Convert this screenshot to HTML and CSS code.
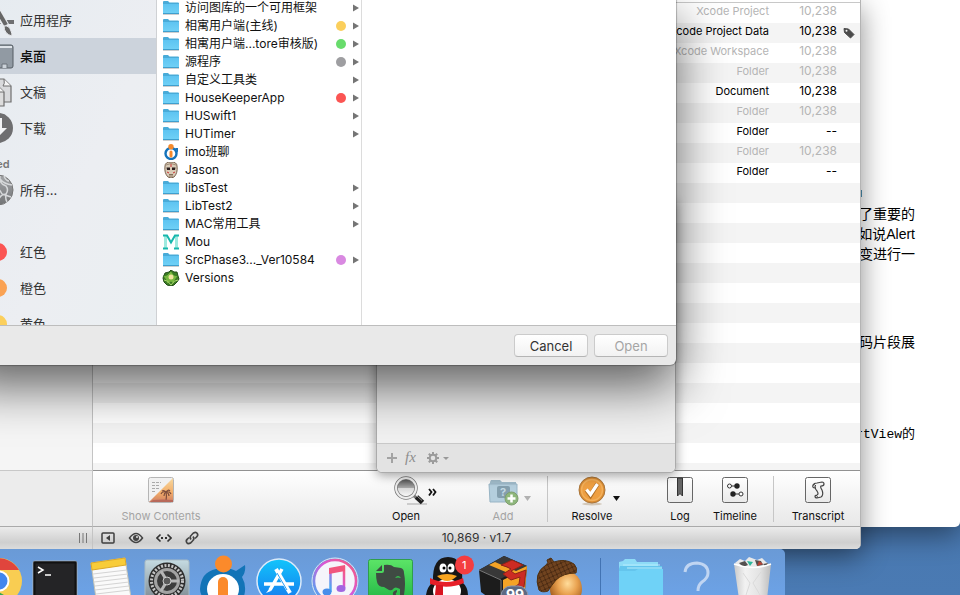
FILE: index.html
```html
<!DOCTYPE html>
<html lang="zh-CN">
<head>
<meta charset="utf-8">
<title>Desktop</title>
<link rel="stylesheet" href="styles.css">
</head>
<body>
<svg class="defs" aria-hidden="true">
  <defs>
    <linearGradient id="folderFill" x1="0" y1="0" x2="0" y2="1"><stop offset="0" stop-color="#5ec4f1"/><stop offset="1" stop-color="#6fd0f6"/></linearGradient>
    <linearGradient id="btnFill" x1="0" y1="0" x2="0" y2="1"><stop offset="0" stop-color="#fff"/><stop offset="1" stop-color="#e9e9e9"/></linearGradient>
    <linearGradient id="grayFill" x1="0" y1="0" x2="0" y2="1"><stop offset="0" stop-color="#a3a5a8"/><stop offset="1" stop-color="#737577"/></linearGradient>
    <linearGradient id="blueFill" x1="0" y1="0" x2="0" y2="1"><stop offset="0" stop-color="#12c5fb"/><stop offset="1" stop-color="#1678ee"/></linearGradient>
    <linearGradient id="noteFill" x1="1" y1="0" x2="0" y2="1"><stop offset="0" stop-color="#fb5b74"/><stop offset=".45" stop-color="#d758d8"/><stop offset="1" stop-color="#37b4f6"/></linearGradient>
    <linearGradient id="sunset" x1="0" y1="0" x2="0" y2="1"><stop offset="0" stop-color="#f7d9a0"/><stop offset=".6" stop-color="#f3ae6a"/><stop offset="1" stop-color="#cf7f63"/></linearGradient>
    <linearGradient id="greenFill" x1="0" y1="0" x2="0" y2="1"><stop offset="0" stop-color="#5ce467"/><stop offset="1" stop-color="#1fb544"/></linearGradient>
    <linearGradient id="metal" x1="0" y1="0" x2="0" y2="1"><stop offset="0" stop-color="#c5dbe2"/><stop offset="1" stop-color="#77828a"/></linearGradient>
    <linearGradient id="trashFill"><stop offset="0" stop-color="#c9c9c9"/><stop offset=".3" stop-color="#f2f2f2"/><stop offset=".7" stop-color="#e3e3e3"/><stop offset="1" stop-color="#bdbdbd"/></linearGradient>
    <linearGradient id="lens" x1="0" y1="0" x2="0" y2="1"><stop offset="0" stop-color="#454545"/><stop offset=".5" stop-color="#a9a9a9"/><stop offset=".52" stop-color="#d8d8d8"/><stop offset="1" stop-color="#fff"/></linearGradient>
    <radialGradient id="nut" cx=".55" cy=".35" r=".6"><stop offset="0" stop-color="#ffdc9a"/><stop offset=".5" stop-color="#e9a250"/><stop offset="1" stop-color="#a8601f"/></radialGradient>
    <pattern id="capTexture" width="6" height="6" patternUnits="userSpaceOnUse" patternTransform="rotate(20)"><rect width="6" height="6" fill="#70431f"/><path d="M0 0l6 6M6 0L0 6" stroke="#4a2a12" stroke-width="1"/></pattern>
    <symbol id="folder" viewBox="0 0 18 16"><path d="M1 14.500h16" stroke="#cfcfcf"/><path d="M1 2q0-1 1-1h4l1.500 1.500H16q1 0 1 1V14H1z" fill="#49abd8"/><path d="M1 4h16v9H1z" fill="url(#folderFill)"/><path d="M1 13.500h16" stroke="#3f9fce"/></symbol>
    <symbol id="arrow" viewBox="0 0 8 8"><path d="M1 .5v7L7 4z" fill="#757575"/></symbol>
  </defs>
</svg>

<article class="document">
  <span class="document-mark"></span>
  <p>了重要的<br>如说Alert<br>变进行一</p>
  <p class="snippet">代码片段展</p>
  <p class="code"><code>rtView</code>的</p>
</article>

<main class="repo-window">
  <aside class="repo-sidebar"></aside>
  <section class="browser">
    <div class="browser-head"></div>
    <div class="stripes">
      <table class="files">
        <tbody>
          <tr class="muted"><td>Xcode Project</td><td>10,238</td><td></td></tr>
          <tr><td>Xcode Project Data</td><td>10,238</td><td class="tag-cell"><svg class="tag" viewBox="0 0 12 12"><path d="M1 1.500L5.500 2 11 7.500 7.500 11 1.500 5.500z" fill="#4b4b4b" stroke="#4b4b4b" stroke-linejoin="round"/><circle cx="3.500" cy="3.700" r="1" fill="#f4f4f4"/></svg></td></tr>
          <tr class="muted"><td>Xcode Workspace</td><td>10,238</td><td></td></tr>
          <tr class="muted"><td>Folder</td><td>10,238</td><td></td></tr>
          <tr><td>Document</td><td>10,238</td><td></td></tr>
          <tr class="muted"><td>Folder</td><td>10,238</td><td></td></tr>
          <tr><td>Folder</td><td>--</td><td></td></tr>
          <tr class="muted"><td>Folder</td><td>10,238</td><td></td></tr>
          <tr><td>Folder</td><td>--</td><td></td></tr>
        </tbody>
      </table>
    </div>
  </section>
  <div class="sidebar-foot"></div>
  <div class="toolbar">
    <button class="tool wide" disabled>
      <svg viewBox="0 0 136 30"><rect x="55.500" y="1.500" width="25" height="25" rx="2" fill="#f1f1f1" stroke="#b5b5b5"/><path d="M80 2v24H56z" fill="url(#sunset)"/><path d="M59 6.500h9M59 9.500h7M59 12.500h8M59 15.500h4" stroke="#aaa" stroke-dasharray="3 1"/><path d="M73 25q1-5 0-9m0 0q-4-1-5 2m5-2q-2 1-2 4m2-4q4-1 5 2m-5-2q3 1 3 4m-3-4q-2-2-4-1m4 1q2-3 4-1" stroke="#7d4c3c" fill="none" stroke-width="1.200"/><path d="M57 26h23v-2q-10-1-20 0z" fill="#b8695a"/></svg>
      <span>Show Contents</span>
    </button>
    <span class="spacer"></span>
    <button class="tool">
      <svg viewBox="0 0 66 30"><path d="M34 28h20" stroke="#ccc" stroke-width="2"/><path d="M41 20l4 3" stroke="#777" stroke-width="3"/><path d="M43.500 21l6 5.500" stroke="#1d1d1d" stroke-width="5"/><path d="M44 20l5 4.500" stroke="#999" stroke-width="1"/><circle cx="33" cy="12" r="10" fill="url(#lens)" stroke="#777" stroke-width="3.500"/><circle cx="33" cy="12" r="10" fill="none" stroke="#eee" stroke-width="2"/><path d="M56 13l2.500 3-2.500 3.500M60 13l2.500 3-2.500 3.500" fill="none" stroke="#111" stroke-width="1.800"/></svg>
      <span>Open</span>
    </button>
    <button class="tool add" disabled>
      <svg viewBox="0 0 66 30"><path d="M20 6l1-2h9l2 2h14v20H20z" fill="#a1bccb"/><path d="M19 8h28v18H20z" fill="#b4cedd" stroke="#98b4c4"/><rect x="27" y="10" width="13" height="12" rx="2" fill="#849fae"/><text x="30" y="20" font-size="11" font-weight="700" fill="#c2d8e4">?</text><circle cx="41.500" cy="22.500" r="6.500" fill="#8eb77c" stroke="#7f9e70"/><path d="M41.500 18.500v8M37.500 22.500h8" stroke="#fff" stroke-width="2.500"/><path d="M54 20h7l-3.500 5z" fill="#b1b1b1"/></svg>
      <span>Add</span>
    </button>
    <span class="divider"></span>
    <button class="tool">
      <svg viewBox="0 0 66 30"><ellipse cx="33" cy="28" rx="10" ry="1.500" fill="#d2c7b8"/><circle cx="33" cy="14" r="13" fill="#dc8d32" stroke="#a9763d"/><circle cx="33" cy="14" r="10.500" fill="#ee9f42" stroke="#f2b05c" stroke-width="1.500"/><path d="M27.500 14l4 5.500L38.500 8" fill="none" stroke="#b17129" stroke-width="4.500"/><path d="M27.500 13.500l4 5L38.500 8" fill="none" stroke="#fff" stroke-width="3.300"/><path d="M54 20h7l-3.500 5z" fill="#111"/></svg>
      <span>Resolve</span>
    </button>
    <button class="tool log">
      <svg viewBox="0 0 66 30"><rect x="20.500" y="1.500" width="25" height="25" rx="2" fill="url(#btnFill)" stroke="#666"/><path d="M30.500 2h5v18L33 17.500 30.500 20z" fill="#666" stroke="#333"/></svg>
      <span>Log</span>
    </button>
    <button class="tool timeline">
      <svg viewBox="0 0 66 30"><rect x="20.500" y="1.500" width="25" height="25" rx="2" fill="url(#btnFill)" stroke="#666"/><path d="M29 10h6M31 18h6" stroke="#333"/><circle cx="27.500" cy="10" r="2" fill="#fff" stroke="#333"/><circle cx="35" cy="10" r="2.700" fill="#222"/><circle cx="31" cy="18" r="2.700" fill="#222"/><circle cx="39" cy="18" r="2" fill="#fff" stroke="#333"/></svg>
      <span>Timeline</span>
    </button>
    <span class="divider"></span>
    <button class="tool">
      <svg viewBox="0 0 66 30"><rect x="20.500" y="1.500" width="25" height="25" rx="2" fill="url(#btnFill)" stroke="#666"/><path d="M30 12q-3 0-2-3 1-2 4-2l5-1q2 0 2 2t-3 2q-1 1 1 4 2 5-1 7l-4 1q-2 0-2-2 0-1 2-1 2-1 0-4-2-2-2-5" fill="#f3f3f3" stroke="#444" stroke-width="1.200"/><path d="M28 9q2-1 3 1M32 22q1-2-1-3" fill="none" stroke="#444"/></svg>
      <span>Transcript</span>
    </button>
  </div>
  <div class="status-side"><svg class="grip" viewBox="0 0 10 10"><path d="M1.500 0v10M5 0v10M8.500 0v10" stroke="#777"/></svg></div>
  <footer class="status">
    <div class="status-tools">
      <button aria-label="Toggle panel"><svg viewBox="0 0 16 16"><rect x="2" y="3" width="12" height="10" rx="1" fill="none" stroke="#3f3f3f" stroke-width="1.500"/><path d="M10 5v6L6 8z" fill="#3f3f3f"/></svg></button>
      <button aria-label="Preview"><svg viewBox="0 0 16 16"><path d="M1.500 8Q8-1 14.500 8 8 17 1.500 8z" fill="none" stroke="#444" stroke-width="1.500"/><circle cx="8" cy="8" r="3" fill="#444"/><circle cx="9" cy="7" r="1" fill="#ddd"/></svg></button>
      <button aria-label="Compare"><svg viewBox="0 0 16 16"><path d="M4.500 4.500L1 8l3.500 3.500M11.500 4.500L15 8l-3.500 3.500" fill="none" stroke="#333" stroke-width="1.600"/><path d="M5 8h2M9 8h2" stroke="#333" stroke-width="2"/></svg></button>
      <button aria-label="Link"><svg viewBox="0 0 16 16" fill="none" stroke="#444" stroke-width="1.600"><path d="M7 9.500Q5 7 7.500 5L9.500 3Q12 1.500 13.300 3.500 14.500 5.500 12.500 7L11 8.500M9 6.500q2 2.500-.5 4.500l-2 2Q4 14.500 2.700 12.500 1.500 10.500 3.500 9L5 7.500"/></svg></button>
    </div>
    <span class="version">10,869 · v1.7</span>
  </footer>
</main>

<section class="sheet">
  <footer class="sheet-bar">
    <svg viewBox="0 0 64 16"><path d="M7 3v10M2 8h10" stroke="#a3a3a3" stroke-width="2"/><text x="20" y="12" class="fx">fx</text><g stroke="#9b9b9b"><circle cx="48" cy="8" r="3.300" fill="none" stroke-width="2"/><path d="M48 2v3M48 11v3M42 8h3M51 8h3M43.800 3.800l2 2M50.200 10.200l2 2M43.800 12.200l2-2M50.200 5.800l2-2" stroke-width="2"/></g><path d="M58 7h6l-3 3z" fill="#999"/></svg>
  </footer>
</section>

<section class="dialog" role="dialog" aria-label="Open">
  <div class="panes">
    <nav class="places">
      <a class="place" href="#"><svg viewBox="0 0 32 32"><path d="M4 16h28v4H4z" fill="#6e6f71"/><path d="M15 5l10 19" stroke="#e7eaee" stroke-width="7"/><path d="M13 2l11 19" stroke="#666" stroke-width="4"/><path d="M22 22q5-1 7 5 1 2 1 5-8-2-8-10z" fill="#666" stroke="#e7eaee"/></svg><span>应用程序</span></a>
      <a class="place selected" href="#"><svg viewBox="0 0 32 32"><rect x="1" y="5" width="30" height="23" rx="2" fill="#919aa3" stroke="#555c63"/><path d="M2 7h28" stroke="#dfe4e9" stroke-width="2"/><path d="M20 28v-4h5v4" fill="#ccd3da" stroke="#6b737b"/></svg><span>桌面</span></a>
      <a class="place" href="#"><svg viewBox="0 0 32 32"><path d="M14 3h8l7 7v16H14z" fill="#d9dadc" stroke="#6e6e6e" stroke-width="1.200"/><path d="M22 3q1 5-1 7h8" fill="#f5f5f5" stroke="#6e6e6e"/><path d="M7 9h8l7 7v14H7z" fill="#ddd" stroke="#6e6e6e" stroke-width="1.200"/><path d="M15 9q1 5-1 7h8" fill="#f5f5f5" stroke="#6e6e6e"/></svg><span>文稿</span></a>
      <a class="place" href="#"><svg viewBox="0 0 32 32"><circle cx="16" cy="16" r="15" fill="#6e6e70"/><path d="M13 6h7v10h5l-9 9-9-9h6z" fill="#f2f3f5"/></svg><span>下载</span></a>
      <h2 class="places-title">Shared</h2>
      <a class="place" href="#"><svg viewBox="0 0 32 32"><circle cx="16" cy="16" r="15" fill="url(#grayFill)" stroke="#777"/><path d="M18 2q-1 8 6 10 3 4 0 8-5 0-7 5M18 5q4 5 12 6M20 20l9 3M12 12q5 2 8 8M24 20q-1 5 1 8M22 2q2 5 5 5" fill="none" stroke="#d6d8da" stroke-width="1.500"/></svg><span>所有...</span></a>
      <span class="places-gap"></span>
      <a class="place" href="#"><span class="place-dot red"></span><span>红色</span></a>
      <a class="place" href="#"><span class="place-dot orange"></span><span>橙色</span></a>
      <a class="place" href="#"><span class="place-dot yellow"></span><span>黄色</span></a>
    </nav>
    <ul class="entries">
      <li><svg class="ico"><use href="#folder"/></svg><span class="name">访问图库的一个可用框架</span><svg class="more"><use href="#arrow"/></svg></li>
      <li><svg class="ico"><use href="#folder"/></svg><span class="name">相寓用户端(主线)</span><i class="dot yellow"></i><svg class="more"><use href="#arrow"/></svg></li>
      <li><svg class="ico"><use href="#folder"/></svg><span class="name">相寓用户端...tore审核版)</span><i class="dot green"></i><svg class="more"><use href="#arrow"/></svg></li>
      <li><svg class="ico"><use href="#folder"/></svg><span class="name">源程序</span><i class="dot gray"></i><svg class="more"><use href="#arrow"/></svg></li>
      <li><svg class="ico"><use href="#folder"/></svg><span class="name">自定义工具类</span><svg class="more"><use href="#arrow"/></svg></li>
      <li><svg class="ico"><use href="#folder"/></svg><span class="name">HouseKeeperApp</span><i class="dot red"></i><svg class="more"><use href="#arrow"/></svg></li>
      <li><svg class="ico"><use href="#folder"/></svg><span class="name">HUSwift1</span><svg class="more"><use href="#arrow"/></svg></li>
      <li><svg class="ico"><use href="#folder"/></svg><span class="name">HUTimer</span><svg class="more"><use href="#arrow"/></svg></li>
      <li><svg class="ico" viewBox="0 0 18 16"><circle cx="9" cy="9.500" r="5.500" fill="#fff" stroke="#1573bb" stroke-width="2.400"/><path d="M13 4h3v5z" fill="#1573bb"/><circle cx="9" cy="2.700" r="2.700" fill="#f58a2c"/><rect x="7.500" y="6.500" width="3" height="7" rx="1.500" fill="#f58a2c"/></svg><span class="name">imo班聊</span></li>
      <li><svg class="ico" viewBox="0 0 18 16"><path d="M3 4q0-4 6-4t6 4q1 7-3 11-3 2-6 0Q2 11 3 4z" fill="#d9cbb7" stroke="#79624e"/><path d="M4 3q5-3 10 0" stroke="#a08c76" fill="none"/><path d="M4.500 5.500h3.500v2.500H5zM10 5.500h3.500L13 8h-3z" fill="#2b1f1f"/><path d="M9 2v3M5 10l2 1M13 10l-2 1" stroke="#c33"/><path d="M7 12.500h4M7 14h4" stroke="#86705b"/></svg><span class="name">Jason</span></li>
      <li><svg class="ico"><use href="#folder"/></svg><span class="name">libsTest</span><svg class="more"><use href="#arrow"/></svg></li>
      <li><svg class="ico"><use href="#folder"/></svg><span class="name">LibTest2</span><svg class="more"><use href="#arrow"/></svg></li>
      <li><svg class="ico"><use href="#folder"/></svg><span class="name">MAC常用工具</span><svg class="more"><use href="#arrow"/></svg></li>
      <li><svg class="ico" viewBox="0 0 18 16"><path d="M3.500 1v13M14.500 1v13" stroke="#9eeadf" stroke-width="3"/><path d="M1 1.500h4l4 7 4-7h4M1 14.500h5M12 14.500h5" fill="none" stroke="#18b7ad" stroke-width="2"/></svg><span class="name">Mou</span></li>
      <li><svg class="ico"><use href="#folder"/></svg><span class="name">SrcPhase3..._Ver10584</span><i class="dot purple"></i><svg class="more"><use href="#arrow"/></svg></li>
      <li><svg class="ico" viewBox="0 0 18 16"><path d="M9 0l3 2 3 0 1 4 1 3-2 3-3 3-3 1-4-1-3-3-1-4 2-5 4-1z" fill="#3c7e25" stroke="#244f18"/><path d="M9 1l3 4 4 1-3 4-1 4-3-2-4 2-1-4-3-4 4-1z" fill="#77b83f" stroke="#2f6b20" stroke-width=".7"/><circle cx="9" cy="7" r="2.500" fill="#f2e2a0"/><path d="M2 10q4 0 7 5 3-5 7-5" fill="none" stroke="#a9d66b"/></svg><span class="name">Versions</span></li>
    </ul>
    <div class="preview"></div>
  </div>
  <footer class="actions">
    <button class="push">Cancel</button>
    <button class="push" disabled>Open</button>
  </footer>
</section>

<nav class="dock" aria-label="Dock">
  <button aria-label="Chrome"><svg viewBox="0 0 56 46"><circle cx="28" cy="32" r="23" fill="#f9cd52"/><path d="M5 32a23 23 0 0 1 43-11H28z" fill="#e0453d"/><path d="M5 20l14 18 14 8H5z" fill="#35a852"/><circle cx="28" cy="32" r="10.500" fill="#fff"/><circle cx="28" cy="32" r="8.500" fill="#4286ee"/></svg></button>
  <button aria-label="Terminal"><svg viewBox="0 0 56 46"><rect x="6" y="12" width="44" height="44" rx="2" fill="#242426" stroke="#a4b0bc"/><rect x="7.500" y="13.500" width="41" height="41" fill="none" stroke="#111" stroke-width="2"/><path d="M11 18l5 3-5 3M18 26h6" fill="none" stroke="#fff" stroke-width="1.500"/></svg></button>
  <button aria-label="Notes"><svg viewBox="0 0 56 46"><path d="M8 14l34-5 6 40H13z" fill="#fafafa" stroke="#c9c6b6"/><path d="M8 14l34-5 1 7-34 5z" fill="#f8cc39" stroke="#dca929"/><path d="M10 25l34-4M11 29l34-4M11 33l34-4M12 37l34-4M12 41l34-4M13 45l34-4" stroke="#d4d4d4"/></svg></button>
  <button aria-label="Settings"><svg viewBox="0 0 56 46"><rect x="6" y="11" width="44" height="44" rx="2" fill="url(#metal)" stroke="#a9bac3"/><circle cx="28" cy="32" r="18.500" fill="#2e2e2e"/><circle cx="28" cy="32" r="15.500" fill="none" stroke="#c4c4c4" stroke-width="3" stroke-dasharray="2 1.500"/><circle cx="28" cy="32" r="11.500" fill="#3c3c3c" stroke="#a2a2a2" stroke-width="3"/><path d="M28 32L22 22M28 32h12M28 32l-6 10" stroke="#b6b6b6" stroke-width="3"/><circle cx="28" cy="32" r="4" fill="#5a5a5a" stroke="#ccc"/></svg></button>
  <button aria-label="imo"><svg viewBox="0 0 56 46"><path d="M5 40q1-17 16-20h15q3 1 5 2l9-6q1 7-3 12 5 9 2 19H7Q5 44 5 40z" fill="#1274b7"/><ellipse cx="28" cy="40" rx="16" ry="15" fill="#fff"/><rect x="23" y="28" width="10" height="30" rx="5" fill="#fb8a2b"/><circle cx="28.500" cy="15" r="8.500" fill="#fb8a2b"/></svg></button>
  <button aria-label="App Store"><svg viewBox="0 0 56 46"><circle cx="28" cy="32" r="22" fill="url(#blueFill)" stroke="#dbeafa" stroke-width="1.500"/><path d="M31 20L19 41M13 35h30" stroke="#fff" stroke-width="3.500"/><path d="M25 20l14 24" stroke="#fff" stroke-width="4"/><path d="M26 24l10 17" stroke="#2a9ff4"/><path d="M19 39l-4 5 5-2z" fill="#fff"/></svg></button>
  <button aria-label="Music"><svg viewBox="0 0 56 46"><circle cx="28" cy="32" r="21" fill="#f5f5fb" stroke="url(#noteFill)" stroke-width="2.500"/><circle cx="28" cy="32" r="23" fill="none" stroke="#dbe7f6"/><path d="M23.500 43V20M37 39V17" fill="none" stroke="url(#noteFill)" stroke-width="2.500"/><path d="M22 19l16-3v6l-16 3z" fill="#f1567e"/><ellipse cx="20" cy="43" rx="4.500" ry="3.500" fill="#488eea"/><ellipse cx="34" cy="39.500" rx="4.500" ry="3.500" fill="#a266e1"/></svg></button>
  <button aria-label="Evernote"><svg viewBox="0 0 56 46"><rect x="5.500" y="10.500" width="44" height="44" rx="2" fill="url(#greenFill)" stroke="#2f9e4c"/><path d="M13 24h6q2 0 2-2v-6q7-1 10 2l7 1q3 1 3 5 2 10 0 22H30q-1-4 4-5v2q-2 1-1 3h4v-6q-5-3-7 0-1 2-4 1l-5-3q-6 0-7-5-1-4-1-9z" fill="#3f4b43"/><path d="M13 22l6-6v6z" fill="#3f4b43"/><path d="M32 29q3-4 6 0-3-1-6 0z" fill="#38c250"/></svg></button>
  <button aria-label="QQ"><svg viewBox="0 0 56 46"><path d="M7 46q1-8 7-13-1-25 15-25t14 25q6 5 6 13z" fill="#171717"/><ellipse cx="28" cy="42" rx="14" ry="12" fill="#fff"/><ellipse cx="24" cy="19" rx="3.500" ry="4.500" fill="#fff"/><ellipse cx="32" cy="19" rx="3.500" ry="4.500" fill="#fff"/><circle cx="25" cy="19" r="1.500"/><circle cx="31" cy="19" r="1.500"/><path d="M11 29q16 8 33 0l1 5q-16 7-34 1z" fill="#e71f28"/><path d="M18 27q10-4 20 0-5 5-10 5t-10-5z" fill="#f9a51f"/><path d="M17 36h7v10h-8z" fill="#d91520"/><circle cx="45.500" cy="16" r="9.500" fill="#f43d40"/><text x="43" y="20" font-size="11" fill="#fff">1</text></svg></button>
  <button aria-label="Box"><svg viewBox="0 0 56 46"><path d="M4 21l25-14 23 10-2 24-26 15L6 43z" fill="#1c1c1c"/><path d="M4 21l25-14 23 10-27 13z" fill="#383838"/><path d="M14 16l6-3 21 9 11-5-2 24-22 13V31l10-5z" fill="#f4a326"/><path d="M26 16l11-5 11 5-12 6 4 3 11-4-2 17-13 8v-6l8-5 1-7-9 3-8-6 8-5-4-2z" fill="#cc2b23" stroke="#8e2417"/><path d="M4 21l22 10v15" fill="none" stroke="#777"/><rect x="26" y="37" width="27" height="20" rx="10" fill="#5d6982" stroke="#8e99ad"/><text x="31" y="51" font-size="14" font-weight="700" fill="#fff">99</text></svg></button>
  <button aria-label="Acorn"><svg viewBox="0 0 56 46"><ellipse cx="35" cy="40" rx="16" ry="18" fill="url(#nut)"/><path d="M8 41Q2 24 15 16q3-2 1-5l4-2 3 4q11-4 20 2 4 4 2 9-13 0-20 7-5 6-8 11-6 2-9-1z" fill="url(#capTexture)" stroke="#50300f"/></svg></button>
  <span class="dock-divider"></span>
  <button aria-label="Folder"><svg viewBox="0 0 56 46"><path d="M6 13l4-1 2-2h10l2 3h21v10H6z" fill="#8edcf7"/><path d="M7 17h42v30H6V20z" fill="#64c5ed"/><path d="M10 16h37M14 19h35" stroke="#b6edfc"/><path d="M6 22h16l3-2h25v30H6z" fill="#6fd2f7"/></svg></button>
  <button aria-label="Help"><svg viewBox="0 0 56 46"><path d="M16 23q1-9 12-9 11 1 11 10 0 5-6 9-4 3-4 9" fill="none" stroke="#c0d5f2" stroke-width="3"/></svg></button>
  <button aria-label="Trash"><svg viewBox="0 0 56 46"><path d="M10 14l5-4 5 2 4-4 8 3 5-2 4 4 4 3-4 4H14z" fill="#e9e9e9"/><path d="M14 14l6-2 3 4-5 2zM30 11l6 1 2 4-6 1zM38 15l5-1-2 4z" fill="#53504f"/><path d="M22 12l6 1-3 4z" fill="#2bb89b"/><path d="M34 12l4 3-6 2z" fill="#b94335"/><path d="M9 15q19 7 37 0l-4 35H14z" fill="url(#trashFill)"/><path d="M9 15q19 7 37 0" fill="none" stroke="#fff" stroke-width="1.500"/><path d="M18 24l7 10-4 12M36 23l-8 11 7 12" fill="none" stroke="#dadada"/></svg></button>
</nav>
</body>
</html>
```
FILE: styles.css
```css
* { box-sizing: border-box; }

body {
  margin: 0;
  height: 100vh;
  overflow: hidden;
  position: relative;
  background: linear-gradient(#416d9f, #4a7ab3);
  font: 11px/20px Inter, "Noto Sans CJK SC", sans-serif;
  color: #111;
}

button { font: inherit; color: inherit; border: 0; padding: 0; background: none; }
a { color: inherit; text-decoration: none; }
p, h2, ul { margin: 0; padding: 0; }
svg { display: block; }
.defs { position: absolute; width: 0; height: 0; }

/* Document behind everything */
.document {
  position: absolute;
  inset: 0 0 68px 0;
  padding: 190px 45px 0 0;
  background: #fff;
  border-bottom-right-radius: 5px;
  font: 14px/20px "Liberation Sans", "Noto Sans CJK SC", sans-serif;
  color: #000;
  text-align: right;
}
.document-mark { display: block; width: 3px; height: 7px; margin: 0 53px 7px auto; background: #4b8fb0; }
.snippet { margin-top: 68px; }
.code { margin-top: 72px; font-size: 13px; }
.code code { font-family: "Liberation Mono", monospace; font-size: 13px; }

/* Repository window */
.repo-window {
  position: absolute;
  inset: 0 99px 46px 0;
  display: grid;
  grid-template: 1fr 56px 23px / 93px 1fr;
  overflow: hidden;
  background: #fff;
  border-right: 1px solid #b4b4b4;
  border-bottom-right-radius: 5px;
}
.repo-window, .document { box-shadow: 0 8px 28px rgba(0, 0, 0, .45); }
.repo-sidebar, .sidebar-foot, .status-side { border-right: 1px solid #c4c4c4; }
.repo-sidebar { background: #f5f5f5; }
.sidebar-foot { background: #ececec; border-top: 1px solid #c8c8c8; }
.browser { display: flex; flex-direction: column; min-height: 0; }
.browser-head { height: 3px; border-bottom: 1px solid #c8c8c8; }
.stripes { flex: 1; background: repeating-linear-gradient(#fff 0 20px, #f4f4f4 20px 40px); }
.files { width: 100%; border-collapse: collapse; color: #000; }
.files td { height: 20px; padding: 0 0 4px; line-height: 16px; text-align: right; vertical-align: middle; }
.files td:nth-child(2) { width: 68px; font-size: 12px; }
.files td:nth-child(3) { width: 23px; padding: 0 0 0 6px; }
.files .muted { color: #b5b5b5; }
.tag { width: 12px; height: 12px; }

.toolbar {
  display: flex;
  padding: 5px 9px 0 0;
  border-top: 1px solid #929292;
  background: linear-gradient(#fff, #e8e8e8);
}
.tool { display: flex; flex-direction: column; align-items: center; width: 66px; height: 48px; }
.tool svg { width: 66px; height: 30px; flex: none; }
.tool span { line-height: 20px; white-space: nowrap; }
.tool:disabled span { color: #a4a4a4; }
.tool.wide { width: 136px; }
.tool.wide svg { width: 136px; }
.tool.add { margin-left: 31px; }
.tool.log { width: 56px; margin-left: 27px; }
.tool.timeline { width: 54px; }
.spacer { flex: 1; }
.divider { width: 1px; height: 46px; margin: 0 11px; background: #c6c6c6; }

.status, .status-side {
  border-top: 1px solid #aaa;
  background: linear-gradient(#ebebeb, #cfcfcf 70%, #dcdcdc);
}
.status-side { display: flex; align-items: center; justify-content: flex-end; padding-right: 4px; }
.grip { width: 10px; height: 10px; }
.status { display: grid; grid-template-columns: 1fr auto 1fr; align-items: center; }
.status-tools { display: flex; gap: 12px; padding-left: 7px; }
.status-tools svg { width: 16px; height: 16px; }
.version { font-size: 12px; color: #333; }

/* Build settings sheet */
.sheet {
  position: absolute;
  inset: 200px 284px 122px 376px;
  display: flex;
  flex-direction: column;
  justify-content: flex-end;
  background: #f1f1f1;
  border: 1px solid #ababab;
  border-radius: 0 0 6px 6px;
  box-shadow: 0 2px 12px rgba(0, 0, 0, .4);
}
.sheet-bar { padding: 6px 8px; border-top: 1px solid #c9c9c9; background: #e3e3e3; border-radius: 0 0 6px 6px; }
.sheet-bar svg { width: 64px; height: 16px; }
.fx { font: italic 15px "Liberation Serif", serif; fill: #8d8d8d; }

/* Open dialog */
.dialog {
  position: absolute;
  inset: -2px 284px 230px -40px;
  display: flex;
  flex-direction: column;
  overflow: hidden;
  background: #e9e9e9;
  border-radius: 0 0 6px 0;
  box-shadow: 0 0 1px 1px rgba(0, 0, 0, .25), 0 22px 50px rgba(0, 0, 0, .6);
}
.panes { flex: 1; display: grid; grid-template-columns: 197px 205px 1fr; min-height: 0; background: #fff; }
.places {
  overflow: hidden;
  padding-top: 4px;
  border-right: 1px solid #cfd1d4;
  background: linear-gradient(115deg, #e5ebf0, #eceef2 60%, #eaeff2);
  font-size: 13px;
  color: #333;
}
.place { display: flex; align-items: center; gap: 6px; height: 36px; padding-left: 22px; }
.place svg { width: 32px; height: 32px; }
.place.selected { background: #ccd3dc; font-weight: 500; color: #111; }
.places-title { height: 26px; padding-left: 12px; font-size: 11px; line-height: 36px; font-weight: 600; color: #777; }
.places-gap { display: block; height: 26px; }
.place-dot { width: 18px; height: 18px; margin: 0 7px; border-radius: 50%; }

.entries { list-style: none; overflow: hidden; padding-top: 1px; border-right: 1px solid #dcdcdc; font-size: 12px; line-height: 18px; }
.entries li { display: flex; align-items: center; height: 18px; padding: 0 1px 0 5px; }
.ico { width: 18px; height: 16px; flex: none; }
.name { flex: 1; padding-left: 5px; white-space: nowrap; }
.more { width: 8px; height: 8px; }
.dot { width: 10px; height: 10px; margin-right: 6px; border-radius: 50%; }
.red { background: #fb5553; }
.orange { background: #faa253; }
.yellow { background: #fbcf5c; }
.green { background: #68dc6c; }
.gray { background: #9e9ea1; }
.purple { background: #d989e1; }

.actions { display: flex; justify-content: flex-end; gap: 6px; height: 40px; padding: 8px 8px 0; border-top: 1px solid #bdbdbd; }
.push {
  width: 74px;
  height: 23px;
  background: linear-gradient(#fff, #f2f2f2);
  border: 1px solid #cbcbcb;
  border-bottom-color: #b5b5b5;
  border-radius: 4px;
  font-size: 13px;
  line-height: 20px;
  color: #333;
}
.push:disabled { color: #a5a5a5; }

/* Dock */
.dock {
  position: absolute;
  left: -29px;
  bottom: 0;
  display: flex;
  padding-right: 4px;
  background: linear-gradient(#6a9ad6, #6ca2e6);
  border-top-right-radius: 5px;
}
.dock svg { width: 56px; height: 46px; }
.dock-divider { width: 1px; margin: 9px 12px 0 13px; background: #4273b3; }
```
